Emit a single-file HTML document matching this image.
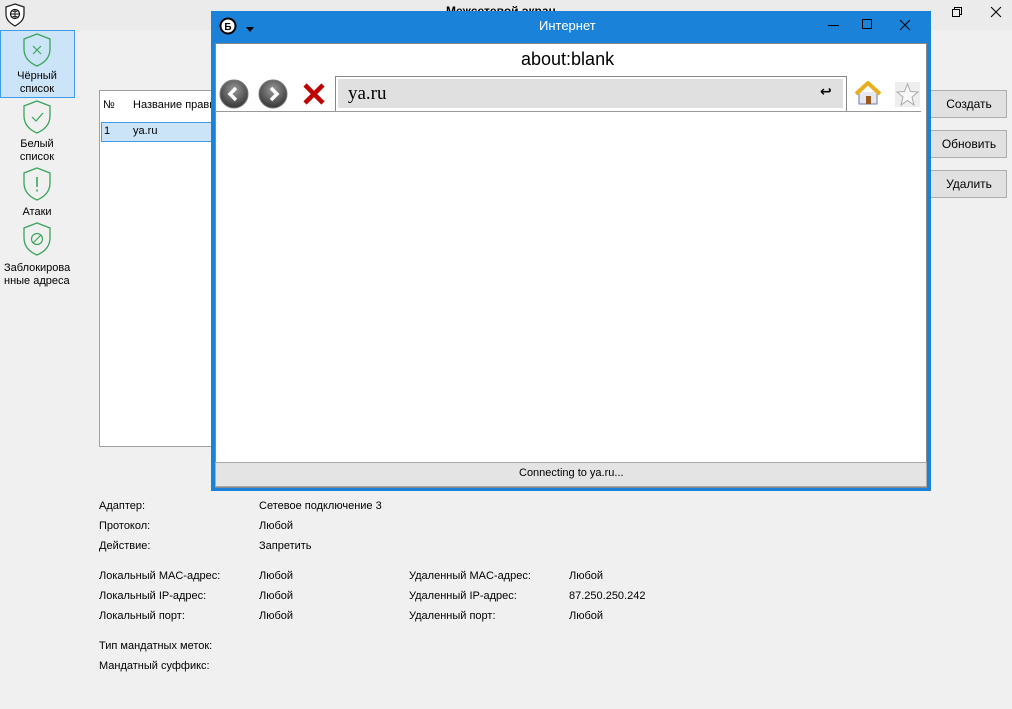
<!DOCTYPE html>
<html><head><meta charset="utf-8"><style>
*{margin:0;padding:0;box-sizing:border-box}
body{width:1012px;height:709px;background:#f0f0f0;font-family:"Liberation Sans","DejaVu Sans",sans-serif;font-size:11px;color:#000;position:relative;overflow:hidden}
.a{position:absolute;white-space:nowrap}
.btn{position:absolute;left:921px;width:86px;height:28px;background:#e1e1e1;border:1px solid #adadad;font-size:12px;text-align:center;line-height:26px;padding-left:10px}
.lbl{font-size:11px}
.side{position:absolute;left:0;width:74px;text-align:center;font-size:11px;line-height:13px}
</style></head><body>
<div class="a" style="left:0;top:0;width:1012px;height:30px;background:#ebebeb"></div>
<svg class="a" style="left:4px;top:3px" width="22" height="24" viewBox="0 0 22 24"><path d="M11 1 L20 4 V11 C20 17 16 20 11 23 C6 20 2 17 2 11 V4 Z" fill="#fff" stroke="#222" stroke-width="1.3"/><circle cx="11" cy="11" r="4.5" fill="none" stroke="#111" stroke-width="1.2"/><path d="M6.5 11H15.5M11 6.5V15.5M8.5 8C10 9 12 9 13.5 8M8.5 14C10 13 12 13 13.5 14" stroke="#111" stroke-width="0.9" fill="none"/></svg>
<div class="a" style="left:446px;top:4px;font-size:12px;font-weight:bold">Межсетевой экран</div>
<svg class="a" style="left:951px;top:6px" width="12" height="12"><path d="M1.5 3.5h7v7h-7zM3.5 3.5V1.5h7v7h-2" fill="none" stroke="#000"/></svg>
<svg class="a" style="left:990px;top:6px" width="12" height="12"><path d="M1 1L11 11M11 1L1 11" stroke="#000"/></svg>

<div class="a" style="left:0;top:30px;width:75px;height:68px;background:#cce4f7;border:1px solid #3d9be9"></div>
<svg class="a" style="left:22px;top:32px" width="30" height="36" viewBox="0 0 30 36"><path d="M15 2 L28 7 V17 C28 26 22 31 15 34 C8 31 2 26 2 17 V7 Z" fill="none" stroke="#3aa55a" stroke-width="1.3"/><path d="M11 14L19 22M19 14L11 22" stroke="#3aa55a" stroke-width="1.2"/></svg>
<div class="side" style="top:70px">Чёрный<br>список</div>
<svg class="a" style="left:22px;top:99px" width="30" height="36" viewBox="0 0 30 36"><path d="M15 2 L28 7 V17 C28 26 22 31 15 34 C8 31 2 26 2 17 V7 Z" fill="none" stroke="#3aa55a" stroke-width="1.3"/><path d="M10 18L14 22L21 14" fill="none" stroke="#3aa55a" stroke-width="1.2"/></svg>
<div class="side" style="top:138px">Белый<br>список</div>
<svg class="a" style="left:22px;top:166px" width="30" height="36" viewBox="0 0 30 36"><path d="M15 2 L28 7 V17 C28 26 22 31 15 34 C8 31 2 26 2 17 V7 Z" fill="none" stroke="#3aa55a" stroke-width="1.3"/><path d="M15 11V21M15 23.5V25.5" stroke="#3aa55a" stroke-width="1.6"/></svg>
<div class="side" style="top:206px">Атаки</div>
<svg class="a" style="left:22px;top:221px" width="30" height="36" viewBox="0 0 30 36"><path d="M15 2 L28 7 V17 C28 26 22 31 15 34 C8 31 2 26 2 17 V7 Z" fill="none" stroke="#3aa55a" stroke-width="1.3"/><circle cx="15" cy="18" r="5.5" fill="none" stroke="#3aa55a" stroke-width="1.2"/><path d="M11 22L19 14" stroke="#3aa55a" stroke-width="1.2"/></svg>
<div class="side" style="top:262px;text-align:left;left:4px">Заблокирова<br>нные адреса</div>

<div class="a" style="left:99px;top:90px;width:130px;height:357px;background:#fff;border:1px solid #a0a0a0"></div>
<div class="a" style="left:103px;top:99px">№</div>
<div class="a" style="left:133px;top:99px">Название правила</div>
<div class="a" style="left:101px;top:122px;width:120px;height:20px;background:#cce4f7;border:1px solid #3d9be9"></div>
<div class="a" style="left:104px;top:125px">1</div>
<div class="a" style="left:133px;top:125px">ya.ru</div>

<div class="btn" style="top:90px">Создать</div>
<div class="btn" style="top:130px">Обновить</div>
<div class="btn" style="top:170px">Удалить</div>

<!-- browser window -->
<div class="a" style="left:211px;top:11px;width:720px;height:480px;background:#1a82d8"></div>
<div class="a" style="left:215px;top:43px;width:712px;height:445px;background:#fff;border:1px solid #888"></div>
<svg class="a" style="left:219px;top:17px" width="18" height="18" viewBox="0 0 18 18"><circle cx="9" cy="9" r="7.5" fill="#fff" stroke="#000" stroke-width="2"/><text x="9" y="13" text-anchor="middle" font-size="10" font-weight="bold" font-family="Liberation Sans">Б</text></svg>
<div class="a" style="left:246px;top:27px;border-left:4px solid transparent;border-right:4px solid transparent;border-top:5px solid #000"></div>
<div class="a" style="left:539px;top:18px;font-size:13px;color:#fff">Интернет</div>
<div class="a" style="left:828px;top:25px;width:11px;height:1px;background:#000"></div>
<div class="a" style="left:862px;top:19px;width:10px;height:10px;border:1px solid #000"></div>
<svg class="a" style="left:899px;top:19px" width="12" height="12"><path d="M1 1L11 11M11 1L1 11" stroke="#000"/></svg>
<div class="a" style="left:521px;top:49px;font-size:18px">about:blank</div>
<svg class="a" style="left:219px;top:79px" width="32" height="32" viewBox="0 0 32 32"><defs><radialGradient id="g" cx="50%" cy="35%" r="60%"><stop offset="0" stop-color="#9a9a9a"/><stop offset="1" stop-color="#3c3c3c"/></radialGradient></defs><circle cx="15" cy="15" r="14" fill="url(#g)" stroke="#777"/><path d="M17 9L11 15L17 21" fill="none" stroke="#fff" stroke-width="3.5"/></svg>
<svg class="a" style="left:258px;top:79px" width="32" height="32" viewBox="0 0 32 32"><circle cx="15" cy="15" r="14" fill="url(#g)" stroke="#777"/><path d="M13 9L19 15L13 21" fill="none" stroke="#fff" stroke-width="3.5"/></svg>
<svg class="a" style="left:302px;top:82px" width="24" height="24"><path d="M3 3L21 21M21 3L3 21" stroke="#c00000" stroke-width="4.5"/></svg>
<div class="a" style="left:335px;top:76px;width:512px;height:36px;border:1px solid #888;background:#fff"></div>
<div class="a" style="left:338px;top:79px;width:505px;height:29px;background:#e0e0e0"></div>
<div class="a" style="left:348px;top:83px;font-family:'Liberation Serif',serif;font-size:19px">ya.ru</div>
<div class="a" style="left:820px;top:83px;font-size:14px;font-weight:bold">↩</div>
<div class="a" style="left:215px;top:111px;width:706px;height:1px;background:#999"></div>
<svg class="a" style="left:854px;top:80px" width="28" height="26" viewBox="0 0 28 26"><path d="M5 12V24H23V12" fill="#e8e8f0" stroke="#6a7ab0"/><path d="M2 14L14 3L26 14" fill="none" stroke="#e8b020" stroke-width="4" stroke-linejoin="round"/><rect x="12" y="16" width="5" height="8" fill="#9a5a20"/></svg>
<svg class="a" style="left:895px;top:82px" width="25" height="25" viewBox="0 0 25 25"><rect width="25" height="25" fill="#eee"/><path d="M12.5 2L15.5 9.5L23 10L17 15L19 23L12.5 18.5L6 23L8 15L2 10L9.5 9.5Z" fill="#fafafa" stroke="#aaa"/></svg>
<div class="a" style="left:215px;top:462px;width:712px;height:25px;background:#e4e4e4;border:1px solid #aaa"></div>
<div class="a" style="left:519px;top:467px">Connecting to ya.ru...</div>

<div class="a" style="left:99px;top:500px">Адаптер:</div><div class="a" style="left:259px;top:500px">Сетевое подключение 3</div>
<div class="a" style="left:99px;top:520px">Протокол:</div><div class="a" style="left:259px;top:520px">Любой</div>
<div class="a" style="left:99px;top:540px">Действие:</div><div class="a" style="left:259px;top:540px">Запретить</div>
<div class="a" style="left:99px;top:570px">Локальный MAC-адрес:</div><div class="a" style="left:259px;top:570px">Любой</div>
<div class="a" style="left:409px;top:570px">Удаленный MAC-адрес:</div><div class="a" style="left:569px;top:570px">Любой</div>
<div class="a" style="left:99px;top:590px">Локальный IP-адрес:</div><div class="a" style="left:259px;top:590px">Любой</div>
<div class="a" style="left:409px;top:590px">Удаленный IP-адрес:</div><div class="a" style="left:569px;top:590px">87.250.250.242</div>
<div class="a" style="left:99px;top:610px">Локальный порт:</div><div class="a" style="left:259px;top:610px">Любой</div>
<div class="a" style="left:409px;top:610px">Удаленный порт:</div><div class="a" style="left:569px;top:610px">Любой</div>
<div class="a" style="left:99px;top:640px">Тип мандатных меток:</div>
<div class="a" style="left:99px;top:660px">Мандатный суффикс:</div>
</body></html>
